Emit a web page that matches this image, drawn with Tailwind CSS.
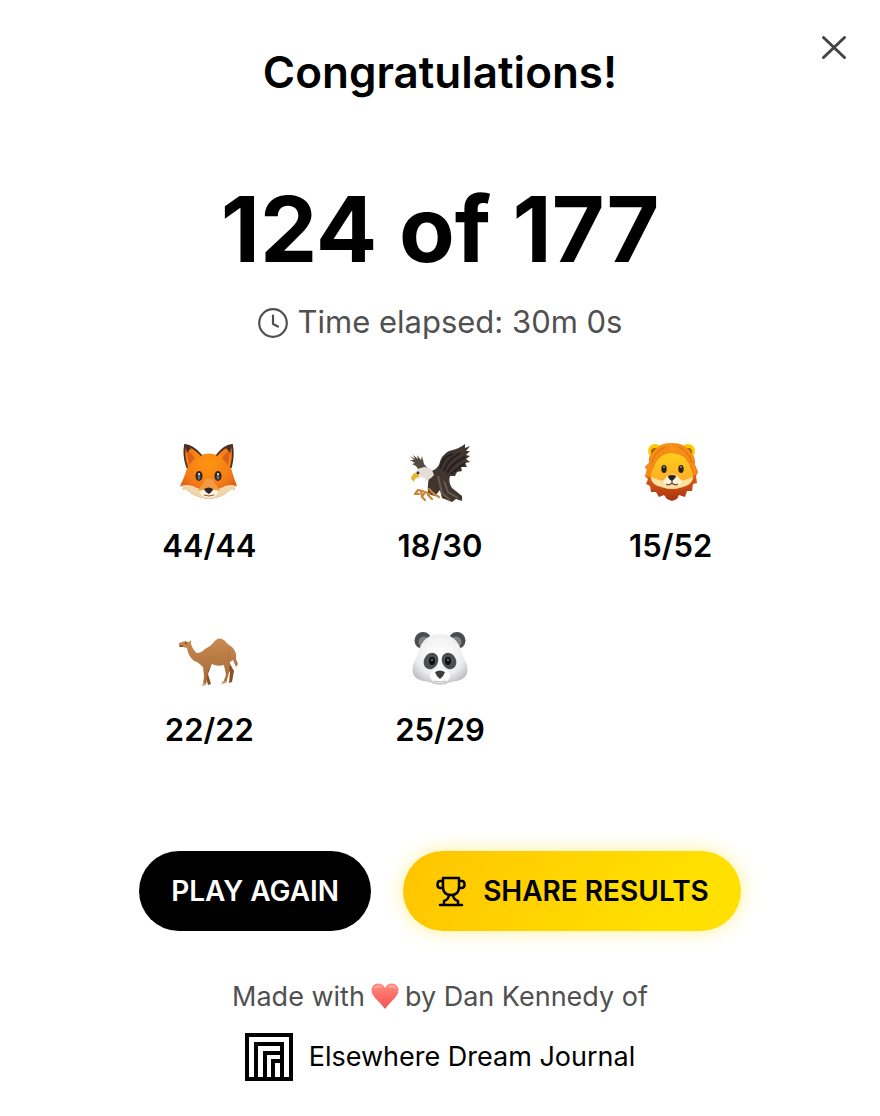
<!DOCTYPE html>
<html lang="en">
<head>
    <meta charset="UTF-8">
    <meta name="viewport" content="width=device-width, initial-scale=1.0">
    <title>Congratulations!</title>
    <script src="https://cdn.jsdelivr.net/npm/@tailwindcss/browser@4"></script>
</head>
<body class="min-h-screen bg-white font-['Inter','Liberation_Sans',sans-serif] text-black">
    <main class="relative flex flex-col items-center px-8 pt-10 pb-8">
        <!-- Close -->
        <button type="button" aria-label="Close" class="absolute top-7 right-[26px] p-1 text-[#444]">
            <svg class="size-8" viewBox="0 0 32 32" fill="none" stroke="currentColor" stroke-width="3" stroke-linecap="round">
                <path d="M5.5 5.500L26.500 25.500M26.500 5.500L5.500 25.500"/>
            </svg>
        </button>

        <h1 class="text-[44px] leading-16 font-semibold">Congratulations!</h1>

        <p class="mt-[73px] text-[91px] leading-[104px] font-bold">124 of 177</p>
        <p class="mt-[19px] flex items-center gap-2 text-[31px] leading-11 text-[#505050]">
            <svg class="size-8" viewBox="0 0 32 32" fill="none" stroke="currentColor" stroke-width="2.200" stroke-linecap="round" stroke-linejoin="round">
                <circle cx="16" cy="17" r="13.800"/>
                <path d="M16 9.500V18L21 20.500"/>
            </svg>
            Time elapsed: 30m 0s
        </p>

        <!-- Results by group -->
        <ul class="mt-[90px] grid w-full max-w-[692px] grid-cols-3 gap-y-13 text-center text-[31px] leading-10 font-semibold">
            <li class="flex flex-col items-center gap-3">
                <svg class="size-20" viewBox="0 0 80 80" role="img" aria-label="Fox">
                    <defs>
                        <radialGradient id="fox" cx=".5" cy=".35" r=".7">
                            <stop offset="0" stop-color="#ff960f"/><stop offset=".6" stop-color="#f57b16"/><stop offset="1" stop-color="#cf4f14"/>
                        </radialGradient>
                    </defs>
                    <path d="M16 11Q23 12 32 21Q40 18 48 21Q56 12 63 11Q65 22 62 34Q64 42 68 52L65 53L66 56L61 56Q53 64 40 65Q27 64 18 56L13 56L15 53L11 52Q16 42 18 34Q14 22 16 11Z" fill="url(#fox)"/>
                    <path d="M18 16Q22 19 26 24L20 31ZM61 16Q57 19 53 24L59 31Z" fill="#d9601a"/>
                    <path d="M18 33Q14 21 16 11Q24 12 32 21M62 33Q65 21 63 11Q55 12 48 21" fill="none" stroke="#492e25" stroke-width="1.800" stroke-linecap="round"/>
                    <path d="M16 11L22 14L18 19ZM63 11L57 14L61 19Z" fill="#492e25"/>
                    <path d="M11 52Q17 50 24 52Q31 56 40 55Q49 56 56 52Q62 50 68 52L65 53L66 56L61 56Q53 64 40 65Q27 64 18 56L13 56L15 53Z" fill="#f0d6ad"/>
                    <path d="M29 56Q34 51 36 46Q40 43 44 46Q46 51 51 56Q46 59 40 59Q34 59 29 56Z" fill="#f39a42"/>
                    <path d="M30 57Q35 55 40 56Q46 55 50 57Q47 64 40 64Q33 64 30 57Z" fill="#fff0d6"/>
                    <ellipse cx="30" cy="42" rx="3.500" ry="5" fill="#30211d"/><ellipse cx="49" cy="42" rx="3.500" ry="5" fill="#30211d"/>
                    <ellipse cx="30" cy="43" rx="1.500" ry="2.800" fill="#56748b"/><ellipse cx="49" cy="43" rx="1.500" ry="2.800" fill="#56748b"/>
                    <circle cx="30" cy="40" r="1" fill="#fff"/><circle cx="49" cy="40" r="1" fill="#fff"/>
                    <path d="M35 55Q40 52 44 55Q44 57 40 60Q36 58 35 55Z" fill="#28242a"/>
                    <path d="M35 61Q40 63 45 61" fill="none" stroke="#7d5c42"/>
                </svg>
                <span>44/44</span>
            </li>
            <li class="flex flex-col items-center gap-3">
                <svg class="size-20" viewBox="0 0 80 80" role="img" aria-label="Eagle">
                    <path d="M31 37Q36 36 39 31Q41 21 49 17Q59 15 65 10L65 14L70 12L66 17L70 17L66 21L70 22L66 25L70 28L65 29L67 33L61 33L62 37L57 38L55 42L50 42Q48 48 52 54L62 62L62 67L56 65L52 68L42 64L40 56L35 62L28 60Q27 47 31 37Z" fill="#41352f"/>
                    <path d="M29 36L25 33L18 35L16 32L12 30L15 29L10 26L14 26L10 22L15 25L13 21L18 25L17 21L21 26L22 22L24 30Z" fill="#554a40"/>
                    <path d="M40 34Q43 22 53 20M44 37Q46 27 60 19M47 39Q51 30 65 23M51 40L65 29" fill="none" stroke="#251f20" stroke-width="2"/>
                    <path d="M38 42L42 59L50 66M44 47L48 58L58 64" fill="none" stroke="#695a4d" stroke-width="2"/>
                    <path d="M28 34Q20 32 15 38L12 41L18 44Q22 42 26 45L24 48L31 44L34 41L32 36Z" fill="#e3ded6"/>
                    <path d="M17 39Q11 40 11 45L14 48Q14 44 19 43Z" fill="#edb529"/>
                    <circle cx="18" cy="39" r="1.400" fill="#3d322c"/>
                    <path d="M23 57L18 56L15 60L19 60M21 57L22 63M30 60L25 58L22 63L25 66M28 61L32 65M29 55L34 60L39 63" fill="none" stroke="#c88537" stroke-width="2.200" stroke-linecap="round" stroke-linejoin="round"/>
                </svg>
                <span>18/30</span>
            </li>
            <li class="flex flex-col items-center gap-3">
                <svg class="size-20" viewBox="0 0 80 80" role="img" aria-label="Lion">
                    <defs>
                        <linearGradient id="mane" x1="0" y1="0" x2="0" y2="1">
                            <stop offset="0" stop-color="#ff9f19"/><stop offset=".5" stop-color="#e66818"/><stop offset="1" stop-color="#a53212"/>
                        </linearGradient>
                        <linearGradient id="lion" x1="0" y1="0" x2="0" y2="1">
                            <stop offset="0" stop-color="#ffcd18"/><stop offset="1" stop-color="#ffa62b"/>
                        </linearGradient>
                    </defs>
                    <circle cx="24" cy="17" r="7" fill="#ffc800"/><circle cx="57" cy="17" r="7" fill="#ffc800"/>
                    <circle cx="24" cy="18" r="4" fill="#a65d00"/><circle cx="57" cy="18" r="4" fill="#a65d00"/>
                    <path d="M22 18Q29 8 40 9Q53 8 59 18Q65 23 64 31L67 38L65 42L66 49L62 50L61 57L56 57L54 63L48 61L46 65L41 67L36 65L33 61L28 63L25 58L20 58L19 52L15 50L17 45L14 42L16 36L14 33L18 29Q17 22 22 18Z" fill="url(#mane)"/>
                    <path d="M26 26Q30 19 41 19Q52 20 57 27L61 37Q65 46 57 51Q41 59 25 51Q17 46 21 36Z" fill="url(#lion)"/>
                    <path d="M20 43Q20 51 31 53Q41 57 51 53Q61 51 62 43L54 46Q49 47 47 42L42 40L36 42Q33 48 28 46Z" fill="#ffe0a0"/>
                    <path d="M36 43Q29 49 37 52L42 49L47 52Q54 48 45 43Z" fill="#fff3dc"/>
                    <ellipse cx="33" cy="35" rx="2.700" ry="4" fill="#292322"/><ellipse cx="50" cy="35" rx="2.700" ry="4" fill="#292322"/>
                    <circle cx="33" cy="33" r=".7" fill="#fff"/><circle cx="50" cy="33" r=".7" fill="#fff"/>
                    <path d="M37 42Q41 40 45 42Q45 44 41 47Q37 45 37 42Z" fill="#292322"/>
                    <path d="M41 46V49Q38 52 35 50M41 49Q44 52 47 50" fill="none" stroke="#69483b" stroke-width="1.200"/>
                    <path d="M41 10Q38 18 35 20Q29 22 26 27Q22 31 20 38L20 44L17 42L14 43L16 36L14 33L19 28Q20 11 41 10ZM38 10Q44 13 47 19L53 22Q56 28 60 32L63 42L67 38L64 31Q62 13 47 10Z" fill="#f58c16"/>
                    <path d="M34 13Q23 18 21 29M48 13Q57 17 61 29" fill="none" stroke="#d77013"/>
                </svg>
                <span>15/52</span>
            </li>
            <li class="flex flex-col items-center gap-3">
                <svg class="size-20" viewBox="0 -6 80 80" role="img" aria-label="Camel">
                    <defs>
                        <linearGradient id="camel" x1="0" y1="0" x2="0" y2="1">
                            <stop offset="0" stop-color="#c98b50"/><stop offset="1" stop-color="#a46735"/>
                        </linearGradient>
                    </defs>
                    <path d="M42 42L39 50L42 60L39 61L36 50L36 41ZM60 38L65 47L63 58L60 59L61 48L55 42Z" fill="#895027"/>
                    <path d="M10 19L16 17L20 18L22 16L22 20Q25 28 28 29Q32 29 36 25Q42 22 45 18Q49 12 55 16Q58 20 63 23Q68 28 67 35L69 40L67 43L64 36L61 38L60 49L57 59L54 59L57 51L55 41Q48 43 43 40L39 47L37 61L34 61L35 52L34 43Q28 37 25 37Q19 32 18 24L14 23L10 23Z" fill="url(#camel)"/>
                    <path d="M34 59L37 59L37 61L33 62ZM54 57L58 57L57 59L52 60Z" fill="#d19a70"/>
                    <path d="M38 32Q47 37 56 30M60 27L59 37" fill="none" stroke="#b0753f"/>
                    <path d="M16 19L18 20M11 22L14 22" fill="none" stroke="#4e2d20"/>
                </svg>
                <span>22/22</span>
            </li>
            <li class="flex flex-col items-center gap-3">
                <svg class="size-20" viewBox="0 -6 80 80" role="img" aria-label="Panda">
                    <defs>
                        <radialGradient id="panda" cx=".5" cy=".4" r=".65">
                            <stop offset="0" stop-color="#fff"/><stop offset=".65" stop-color="#eeeeef"/><stop offset="1" stop-color="#b9babd"/>
                        </radialGradient>
                    </defs>
                    <circle cx="23" cy="16.500" r="8.500" fill="#4a4d50"/><circle cx="57" cy="16.500" r="8.500" fill="#4a4d50"/>
                    <circle cx="24" cy="18" r="5.500" fill="#808384"/><circle cx="56" cy="18" r="5.500" fill="#808384"/>
                    <path d="M40 10Q57 10 62 29Q63 32 67 41Q70 54 57 57Q49 58 46 60Q40 61 34 60Q31 58 23 57Q10 54 13 41Q17 32 18 29Q23 10 40 10Z" fill="url(#panda)"/>
                    <ellipse cx="31" cy="37" rx="7" ry="8.500" fill="#4c4e50" transform="rotate(28 31 37)"/><ellipse cx="49" cy="37" rx="7" ry="8.500" fill="#4c4e50" transform="rotate(-28 49 37)"/>
                    <ellipse cx="32" cy="37" rx="3" ry="4" fill="#0d0e10"/><ellipse cx="48" cy="37" rx="3" ry="4" fill="#0d0e10"/>
                    <circle cx="32" cy="36" r=".8" fill="#ccc"/><circle cx="48" cy="36" r=".8" fill="#ccc"/>
                    <ellipse cx="40" cy="52" rx="10" ry="7" fill="#fff"/>
                    <path d="M35 48Q40 45 45 48Q44 52 40 55Q36 52 35 48Z" fill="#3b3c3f"/>
                    <path d="M34 57Q40 59 46 57" fill="none" stroke="#b8b9bb"/>
                </svg>
                <span>25/29</span>
            </li>
        </ul>

        <div class="mt-[101px] flex items-center gap-8 text-[28px] leading-9 font-semibold">
            <button type="button" class="h-20 rounded-full bg-black px-8 text-white">PLAY AGAIN</button>
            <button type="button" class="flex h-20 items-center gap-4 rounded-full bg-linear-120 from-[#ffc400] to-[#ffe000] to-80% px-8 shadow-[0_0_20px_rgba(255,220,0,0.4)]">
                <svg class="size-8" viewBox="0 0 32 32" fill="none" stroke="currentColor" stroke-width="2.500" stroke-linecap="round" stroke-linejoin="round">
                    <path d="M8 3H24V12Q24 20 16 20Q8 20 8 12ZM8 6H5Q2.500 6 2.500 9.500Q2.500 13 5.500 13H8M24 6H27Q29.500 6 29.500 9.500Q29.500 13 26.500 13H24M14 20.500Q13 25 9 26V30M18 20.500Q19 25 23 26V30M5 30H27"/>
                </svg>
                SHARE RESULTS
            </button>
        </div>

        <footer class="mt-12 flex flex-col items-center gap-[18px] text-[27px] leading-9">
            <p class="flex items-center gap-1.5 text-[#505050]">
                Made with
                <svg class="size-7" viewBox="0 0 28 28" role="img" aria-label="love">
                    <defs>
                        <linearGradient id="heart" x1="0" y1="0" x2="0" y2="1">
                            <stop offset="0" stop-color="#ff8d82"/><stop offset="1" stop-color="#f4504d"/>
                        </linearGradient>
                    </defs>
                    <path d="M14 26Q12 23 7 18Q.5 12 .5 7Q1 1 7 .5Q12 .5 14 5Q16 .5 21 .5Q27 1 27.500 7Q27.500 12 21 18Q16 23 14 26Z" fill="url(#heart)"/>
                    <path d="M4 5Q7 2 10 4M18 4Q22 2 24 5" fill="none" stroke="#ffb5aa" stroke-width="1.500" stroke-linecap="round"/>
                </svg>
                by Dan Kennedy of
            </p>
            <a href="#" class="flex items-center gap-4">
                <svg class="size-12" viewBox="0 0 48 48">
                    <path d="M0 0H48V48H0Z"/>
                    <path d="M4 4H44V44H39V9H9V44H4ZM13 13H35V18H18V44H13ZM22 22H35V26H26V44H22ZM30 30H35V44H30Z" fill="#fff"/>
                </svg>
                Elsewhere Dream Journal
            </a>
        </footer>
    </main>
</body>
</html>
